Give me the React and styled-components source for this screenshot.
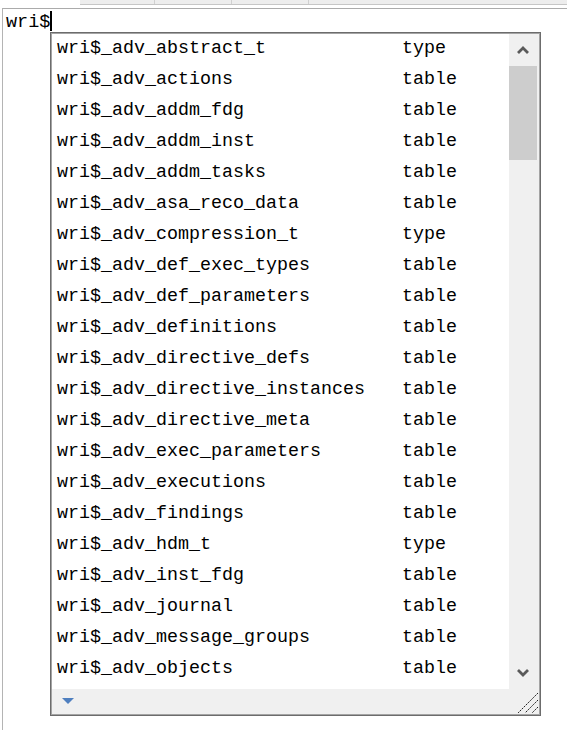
import React from "react";
import styled, { createGlobalStyle } from "styled-components";

const GlobalStyle = createGlobalStyle`
  html, body { margin: 0; padding: 0; background: #ffffff; }
  body { font-family: "Liberation Mono", "DejaVu Sans Mono", monospace; }
  * { box-sizing: border-box; }
`;

const Page = styled.div`
  position: relative;
  width: 567px;
  height: 730px;
  overflow: hidden;
  background: #fff;
`;

const TabStrip = styled.div`
  display: flex;
  margin-left: 80px;
  height: 5px;
  background: #ededed;
  border-bottom: 1px solid #c6c6c6;
`;

const Tab = styled.div`
  width: ${(p) => p.$w}px;
  border-right: 1px solid #d0d0d0;
`;

const Editor = styled.div`
  margin-top: 3px;
  margin-left: 2px;
  height: 722px;
  border-top: 1px solid #ababab;
  border-left: 1px solid #b4b4b4;
`;

const EditorLine = styled.div`
  display: flex;
  align-items: flex-start;
  padding-top: 4px;
  padding-left: 3px;
  font-size: 18.5px;
  line-height: 20px;
  color: #000;
  white-space: pre;
`;

const Caret = styled.span`
  display: inline-block;
  width: 2px;
  height: 20px;
  margin-top: -2px;
  background: #000;
`;

const Popup = styled.div`
  position: absolute;
  left: 50px;
  top: 32px;
  width: 491px;
  height: 684px;
  border: 1px solid #6c6c6c;
  box-shadow: inset 0 0 0 1px #a4a4a4;
  padding: 1px;
  display: flex;
  flex-direction: column;
  background: #f0f0f0;
`;

const Body = styled.div`
  display: flex;
  height: 655px;
`;

const List = styled.div`
  flex: 1;
  background: #fff;
  overflow: hidden;
`;

const Row = styled.div`
  display: grid;
  grid-template-columns: 345px 1fr;
  height: 31px;
  line-height: 30px;
  padding-left: 5px;
  font-size: 18.33px;
  color: #000;
  white-space: pre;
`;

const Scrollbar = styled.div`
  width: 30px;
  display: flex;
  flex-direction: column;
  background: #f0f0f0;
`;

const ArrowBtn = styled.div`
  height: 32px;
  display: flex;
  align-items: center;
  justify-content: center;
  padding-right: 2px;
`;

const Thumb = styled.div`
  height: 94px;
  margin-right: 2px;
  background: #cdcdcd;
`;

const Track = styled.div`
  flex: 1;
`;

const StatusBar = styled.div`
  flex: 1;
  display: flex;
  align-items: center;
  justify-content: space-between;
  padding-left: 10px;
  background: #f0f0f0;
`;

const Grip = styled.div`
  align-self: flex-end;
  width: 22px;
  height: 22px;
  display: flex;
`;

const items = [
  ["wri$_adv_abstract_t", "type"],
  ["wri$_adv_actions", "table"],
  ["wri$_adv_addm_fdg", "table"],
  ["wri$_adv_addm_inst", "table"],
  ["wri$_adv_addm_tasks", "table"],
  ["wri$_adv_asa_reco_data", "table"],
  ["wri$_adv_compression_t", "type"],
  ["wri$_adv_def_exec_types", "table"],
  ["wri$_adv_def_parameters", "table"],
  ["wri$_adv_definitions", "table"],
  ["wri$_adv_directive_defs", "table"],
  ["wri$_adv_directive_instances", "table"],
  ["wri$_adv_directive_meta", "table"],
  ["wri$_adv_exec_parameters", "table"],
  ["wri$_adv_executions", "table"],
  ["wri$_adv_findings", "table"],
  ["wri$_adv_hdm_t", "type"],
  ["wri$_adv_inst_fdg", "table"],
  ["wri$_adv_journal", "table"],
  ["wri$_adv_message_groups", "table"],
  ["wri$_adv_objects", "table"],
];

const Chevron = ({ up }) => (
  <svg width="12" height="8" viewBox="0 0 12 8">
    <path
      d={up ? "M1 7 L6 2 L11 7" : "M1 1 L6 6 L11 1"}
      fill="none"
      stroke="#5a5a5a"
      strokeWidth="2.8"
    />
  </svg>
);

export default function App() {
  return (
    <Page>
      <GlobalStyle />
      <TabStrip>
        <Tab $w={75} />
        <Tab $w={77} />
        <Tab $w={77} />
      </TabStrip>
      <Editor>
        <EditorLine>
          wri$<Caret />
        </EditorLine>
      </Editor>
      <Popup>
        <Body>
          <List>
            {items.map(([name, kind]) => (
              <Row key={name}>
                <span>{name}</span>
                <span>{kind}</span>
              </Row>
            ))}
          </List>
          <Scrollbar>
            <ArrowBtn>
              <Chevron up />
            </ArrowBtn>
            <Thumb />
            <Track />
            <ArrowBtn>
              <Chevron />
            </ArrowBtn>
          </Scrollbar>
        </Body>
        <StatusBar>
          <svg width="12" height="7" viewBox="0 0 12 7">
            <path d="M0 0 L12 0 L6 6 Z" fill="#4f7fbf" />
          </svg>
          <Grip>
            <svg width="22" height="22" viewBox="0 0 22 22">
              <g stroke="#222" strokeWidth="1" strokeDasharray="2 1">
                <line x1="21" y1="1" x2="1" y2="21" />
                <line x1="21" y1="8" x2="8" y2="21" />
                <line x1="21" y1="15" x2="15" y2="21" />
              </g>
            </svg>
          </Grip>
        </StatusBar>
      </Popup>
    </Page>
  );
}
